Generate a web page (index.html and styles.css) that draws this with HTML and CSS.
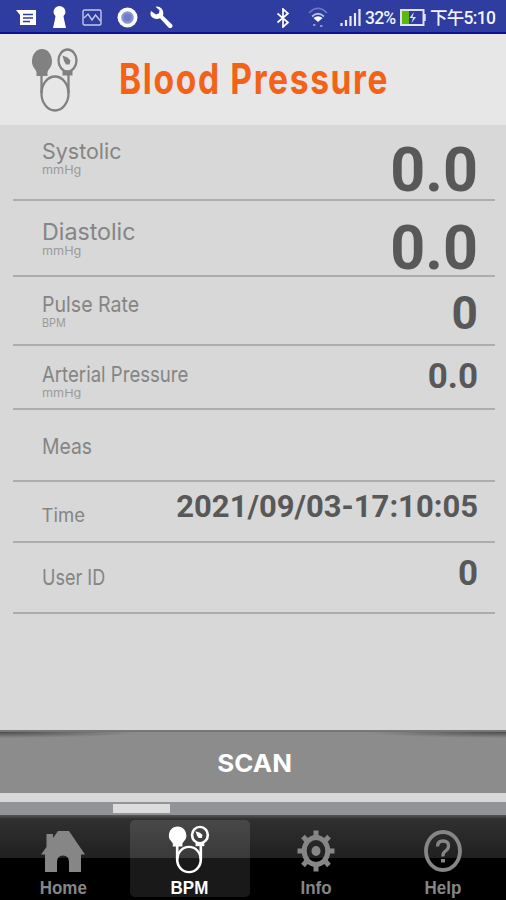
FILE: index.html
```
<!DOCTYPE html>
<html lang="en">
<head>
    <meta charset="UTF-8">
    <meta name="viewport" content="width=device-width, initial-scale=1.0">
    <title>Blood Pressure</title>
    <link rel="stylesheet" href="styles.css">
</head>
<body>
    <!-- shared icons -->
    <svg class="defs" width="0" height="0">
        <symbol id="bpm" viewBox="0 0 48 66">
            <path d="M11 2C5 2 1 7.500 1 14.500 1 20 4.500 22 5.500 25v4h11v-4c1-3 4.500-5 4.500-10.500C21 7.500 17 2 11 2z" fill="currentColor"/>
            <ellipse cx="36.500" cy="13.500" rx="9" ry="11" fill="none" stroke="currentColor"/>
            <path d="M31.500 24h10v4.500h-10z" fill="currentColor"/>
            <path d="M31.500 8.500l5 2 3 3-1 4h-3.500l-2-3.500z" fill="currentColor"/>
            <path d="M10.500 27v19M37.500 27v19" stroke="currentColor"/>
            <ellipse cx="24" cy="46.500" rx="13.500" ry="17" fill="none" stroke="currentColor"/>
        </symbol>
    </svg>

    <div class="status-bar">
        <div class="status-left">
            <svg width="21" height="18" viewBox="0 0 21 18"><path d="M0 1h20v15H4V6z" fill="#fff"/><path d="M7 5.500h10M7 9h10M7 12.500h7" stroke="#2f3ca0" stroke-width="1.300"/></svg>
            <svg width="15" height="23" viewBox="0 0 15 23"><path d="M1.500 6a6 6 0 1 1 12 0q0 2.500-2 4l.7 4 1.800 8H1l1.800-8 .7-4q-2-1.500-2-4z" fill="#fff"/></svg>
            <svg width="20" height="17" viewBox="0 0 20 17" fill="none" stroke="#c3c8ec" stroke-width="1.400"><rect x="1" y="1" width="18" height="15" rx="1.500"/><path d="M2 9l4-4 4 6 3.500-5 5 6"/></svg>
            <svg width="21" height="21" viewBox="0 0 21 21"><circle cx="10.500" cy="10.500" r="10" fill="#fff"/><circle cx="10.500" cy="10.500" r="6.300" fill="#8c96d2"/><circle cx="10.500" cy="10.500" r="4" fill="#717dc8"/></svg>
            <svg class="wrench" width="23" height="23" viewBox="0 0 23 23"><path d="M5.500.8l4 3.500-.5 3-3 1.200L1 5Q-.8 10 3 12t7 .3l8.500 9.200q1.800 1.500 3.300 0t0-3.200L13 9.800Q14 5 11.500 2.500T5.500.8z" fill="#fff"/></svg>
        </div>
        <div class="status-right">
            <svg class="bluetooth" width="14" height="20" viewBox="0 0 14 20" fill="none" stroke="#fff" stroke-width="1.700"><path d="M1.500 5.500l10.500 9-5 4.500V1l5 4.500-10.500 9"/></svg>
            <svg class="wifi" width="20" height="21" viewBox="0 0 20 21" fill="none" stroke-width="1.700"><path d="M1 6Q10-3 19 6" stroke="#6d78c2"/><path d="M4 9.500q6-5.500 12 0" stroke="#b4bbe4"/><path d="M5.500 11q4.500-3.500 9 0L10 15z" fill="#fff"/><path d="M5 18h2.500M12 19h2.500" stroke="#8791d0" stroke-width="2"/></svg>
            <svg class="signal" width="21" height="19" viewBox="0 0 21 19" stroke="#e8eafa" stroke-width="2.200"><path d="M1.500 15v3M6 12v6M10.500 8v10M15 5v13M19.500 1v17"/></svg>
            <span class="percent">32%</span>
            <svg class="battery" width="26" height="17" viewBox="0 0 26 17"><rect x="1" y="1" width="22.500" height="15" fill="none" stroke="#dfe2f4" stroke-width="2"/><path d="M24.500 5v7" stroke="#dfe2f4" stroke-width="2.500"/><path d="M2 2h7v13H2z" fill="#5cb811"/><path d="M14 3l-4.500 6H13l-1.500 5 4.500-6h-3.500z" fill="#dfe2f4"/></svg>
            <span class="clock">下午5:10</span>
        </div>
    </div>

    <header class="header">
        <svg class="header-icon" width="48" height="66"><use href="#bpm"/></svg>
        <h1>Blood Pressure</h1>
    </header>

    <main class="readings">
        <div class="row systolic">
            <div class="label"><span class="name">Systolic</span><span class="unit">mmHg</span></div>
            <span class="value">0.0</span>
        </div>
        <div class="row diastolic">
            <div class="label"><span class="name">Diastolic</span><span class="unit">mmHg</span></div>
            <span class="value">0.0</span>
        </div>
        <div class="row pulse">
            <div class="label"><span class="name">Pulse Rate</span><span class="unit">BPM</span></div>
            <span class="value">0</span>
        </div>
        <div class="row arterial">
            <div class="label"><span class="name">Arterial Pressure</span><span class="unit">mmHg</span></div>
            <span class="value">0.0</span>
        </div>
        <div class="row meas">
            <div class="label"><span class="name">Meas</span></div>
        </div>
        <div class="row time">
            <div class="label"><span class="name">Time</span></div>
            <span class="value">2021/09/03-17:10:05</span>
        </div>
        <div class="row user">
            <div class="label"><span class="name">User ID</span></div>
            <span class="value">0</span>
        </div>
    </main>

    <button class="scan"><span>SCAN</span></button>

    <div class="pager"><div class="pager-thumb"></div></div>

    <nav class="tabs">
        <a class="tab">
            <svg width="46" height="43" viewBox="0 0 46 43"><path d="M1 24.500L6.500 17V4H13v4l5-7h11l16 23.500h-4V42H29V32q0-6.500-6-6.500T17 32v10H5V24.500z" fill="#868686"/></svg>
            <span>Home</span>
        </a>
        <a class="tab active">
            <svg class="tab-bpm" width="42" height="49" viewBox="0 0 48 66" preserveAspectRatio="none"><use href="#bpm" width="48" height="66"/></svg>
            <span>BPM</span>
        </a>
        <a class="tab">
            <svg width="38" height="42" viewBox="-19 -21 38 42" fill="none" stroke="#868686"><ellipse rx="11.800" ry="13.500" stroke-width="5"/><ellipse rx="4.500" ry="5" fill="#868686" stroke="none"/><path d="M0-20.500v6M0 20.500v-6M-18.500 0h6M18.500 0h-6M-13-14.500l4 4.500M13-14.500l-4 4.500M-13 14.500l4-4.500M13 14.500l-4-4.500" stroke-width="5"/></svg>
            <span>Info</span>
        </a>
        <a class="tab">
            <svg width="38" height="42" viewBox="-19 -21 38 42" fill="none" stroke="#868686"><ellipse rx="17" ry="19" stroke-width="3.800"/><path d="M-5.500-4.500q0-5.500 5.500-5.500t5.500 5Q5.500-2 2.500 0T0 5.500" stroke-width="3.300"/><path d="M0 8v3.500" stroke-width="4"/></svg>
            <span>Help</span>
        </a>
    </nav>
</body>
</html>
```
FILE: styles.css
```
:root {
    --bg-color: #d8d8d8;
    --label-color: #858585;
    --value-color: #585858;
    --line-color: #adadad;
    --accent-color: #f26318;
    --status-color: #2f3ca0;
}

* {
    margin: 0;
    padding: 0;
    box-sizing: border-box;
}

body {
    width: 506px;
    height: 900px;
    display: flex;
    flex-direction: column;
    background: var(--bg-color);
    font-family: Inter, "Liberation Sans", sans-serif;
    overflow: hidden;
}

svg {
    display: block;
    flex: none;
}

.defs {
    position: absolute;
}

/* status bar */
.status-bar {
    height: 34px;
    display: flex;
    justify-content: space-between;
    align-items: center;
    padding: 0 10px 0 16px;
    background: var(--status-color);
    border-bottom: 2px solid #0b1392;
    color: #f2f3fc;
    font: 500 17.500px/32px Roboto, "Noto Sans CJK TC", sans-serif;
}

.status-left,
.status-right {
    display: flex;
    align-items: center;
    padding-top: 3px;
}

.status-left {
    gap: 15px;
}

.wrench {
    margin-left: -3px;
}

.bluetooth {
    margin-right: 18px;
}

.wifi {
    margin-right: 12px;
}

.signal {
    margin-right: 4px;
}

.battery {
    margin: 0 4px 0 3px;
}

.percent,
.clock {
    white-space: nowrap;
}

.percent {
    width: 32px;
    letter-spacing: -0.8px;
}

.clock {
    width: 66px;
    letter-spacing: -0.7px;
}

/* header */
.header {
    height: 91px;
    display: flex;
    align-items: flex-start;
    padding: 13px 0 0 31px;
    background: #e7e7e7;
}

.header-icon {
    color: #818181;
    stroke-width: 2.300;
}

h1 {
    margin: 6px 0 0 40px;
    color: var(--accent-color);
    font-size: 42px;
    font-weight: 700;
    line-height: 52px;
    letter-spacing: 2px;
    white-space: nowrap;
    transform: scaleX(0.8);
    transform-origin: left;
}

/* readings */
.readings {
    flex: 1;
    padding: 0 11px 0 13px;
}

.row {
    display: flex;
    justify-content: space-between;
    align-items: flex-start;
    padding: 0 17px 0 28.500px;
    border-bottom: 2px solid var(--line-color);
}

.label {
    display: flex;
    flex-direction: column;
    align-items: flex-start;
    color: var(--label-color);
}

.name {
    font-size: 22px;
    line-height: 24px;
    white-space: nowrap;
    transform-origin: left;
}

.unit {
    color: #9b9b9b;
    font-size: 11.500px;
    line-height: 14px;
    transform: scaleX(1.1);
    transform-origin: left;
}

.value {
    color: var(--value-color);
    font-family: Roboto, sans-serif;
    font-weight: 700;
    white-space: nowrap;
}

.systolic { height: 76px; }
.systolic .label { padding-top: 14px; }
.systolic .name { transform: scaleX(0.975); }
.diastolic { height: 76px; }
.diastolic .label { padding-top: 19px; }
.diastolic .name { font-size: 23px; transform: scaleX(1.01); }
.diastolic .unit { line-height: 15px; }
.pulse { height: 69px; }
.pulse .label { padding-top: 15px; }
.pulse .name { transform: scaleX(0.89); }
.pulse .unit { font-size: 12px; transform: scaleX(0.9); }
.arterial { height: 64px; }
.arterial .label { padding-top: 16px; }
.arterial .name { transform: scaleX(0.845); }
.arterial .unit { font-size: 11px; transform: scaleX(1.15); }
.meas { height: 72px; }
.meas .label { padding-top: 24px; }
.meas .name { transform: scaleX(0.88); }
.time { height: 61px; }
.time .label { padding-top: 21px; }
.time .name { font-size: 18.500px; }
.user { height: 71px; }
.user .label { padding-top: 22px; }
.user .name { transform: scaleX(0.82); }

.systolic .value,
.diastolic .value {
    font-size: 61px;
    line-height: 70px;
    padding-top: 10px;
}

.diastolic .value {
    padding-top: 12px;
}

.pulse .value {
    font-size: 46px;
    line-height: 54px;
    padding-top: 9px;
}

.arterial .value,
.user .value {
    font-size: 35px;
    line-height: 42px;
    padding-top: 10px;
}

.time .value {
    font-size: 31px;
    line-height: 36px;
    padding-top: 7px;
}

/* scan button */
.scan {
    height: 63px;
    border: none;
    border-top: 2px solid #777;
    background:
        radial-gradient(ellipse 140px 6px at 0 0, #4c4c4c, transparent),
        radial-gradient(ellipse 140px 6px at 100% 0, #4c4c4c, transparent),
        #8c8c8c;
    color: #fff;
    font: 700 24px/60px Inter, sans-serif;
}

.scan span {
    display: inline-block;
    padding: 2px 0 0 3px;
    transform: scaleX(1.08);
}

.pager {
    height: 13px;
    margin-top: 9px;
    padding: 2px 0 0 113px;
    background: #919396;
}

.pager-thumb {
    width: 57px;
    height: 9px;
    background: #dcdcdc;
}

/* bottom tabs */
.tabs {
    height: 85px;
    display: flex;
    padding-top: 5px;
    background: linear-gradient(#555 0, #303030 4px, #202020 43px, #000 43px);
}

.tab {
    flex: 1;
    display: flex;
    flex-direction: column;
    align-items: center;
    margin: 0 3px;
    height: 77px;
    padding-top: 10px;
    color: #868686;
    font: 700 17.500px/22px "Liberation Sans", sans-serif;
}

.tab span {
    margin-top: auto;
    margin-bottom: -2px;
    transform: scaleX(0.97);
}

.tab-bpm {
    margin-left: -2px;
    stroke-width: 3;
}

.tab.active {
    padding-top: 5px;
    border-radius: 5px;
    background: linear-gradient(#484848 0, #3a3a3a 38px, #191919 38px);
    color: #fff;
}
```
